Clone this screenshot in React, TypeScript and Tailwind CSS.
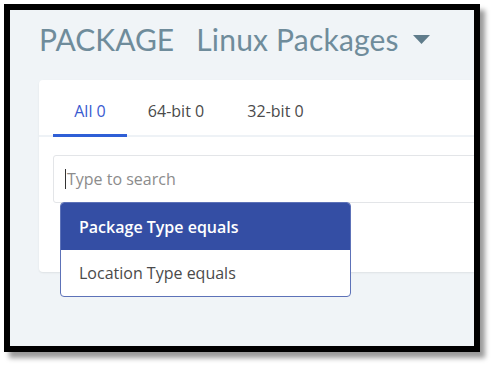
export default function App() {
  return (
    <div className="w-[493px] h-[365px] bg-white font-['Lato','Liberation_Sans',sans-serif]">
      <div className="ml-[4px] pt-[4px]">
        <div className="w-[476px] h-[348px] border-[6px] border-black bg-[#f0f4f7] shadow-[5px_6px_5px_rgba(0,0,0,0.4)] overflow-hidden">
          <div className="flex items-center gap-[22px] pl-[29px] pt-[12px] h-[46px] text-[30px] text-[#6f8c9b] leading-none">
            <span>PACKAGE</span>
            <span className="flex items-center gap-[14px] tracking-[0.2px]">
              Linux Packages
              <svg width="17" height="9" viewBox="0 0 17 9">
                <path d="M0 0 H17 L8.5 9 Z" fill="#5f7c8b" />
              </svg>
            </span>
          </div>
          <div className="relative ml-[29px] mt-[24px] mr-[-20px] h-[192px] bg-white rounded-l-[4px] shadow-[0_1px_2px_rgba(0,0,0,0.08)] font-['Open_Sans','Liberation_Sans',sans-serif]">
            <div className="flex px-[14px] pt-[19px] border-b-2 border-[#eef2f6] text-[16px]">
              <div className="w-[74px] text-center pb-[11px] text-[#3a5bd0] border-b-[3px] border-[#2f5fd6] -mb-[2px]">All 0</div>
              <div className="w-[98px] text-center pb-[11px] text-[#4a4a4a]">64-bit 0</div>
              <div className="w-[101px] text-center pb-[11px] text-[#4a4a4a]">32-bit 0</div>
            </div>
            <div className="mx-[14px] mt-[18px] h-[48px] border border-[#e3e5e8] rounded-[3px] flex items-center pl-[11px] text-[16px] text-[#8c8c8c]">
              <span className="w-px h-[20px] bg-[#333] mr-[1px]" />
              Type to search
            </div>
            <div className="absolute left-[21px] top-[122px] w-[291px] h-[95px] border border-[#5d72b8] rounded-[4px] bg-white overflow-hidden text-[16px]">
              <div className="h-[47px] bg-[#344ea4] text-white font-semibold flex items-center pl-[18px]">Package Type equals</div>
              <div className="h-[46px] text-[#4a4a4a] flex items-center pl-[18px]">Location Type equals</div>
            </div>
          </div>
        </div>
      </div>
    </div>
  );
}
